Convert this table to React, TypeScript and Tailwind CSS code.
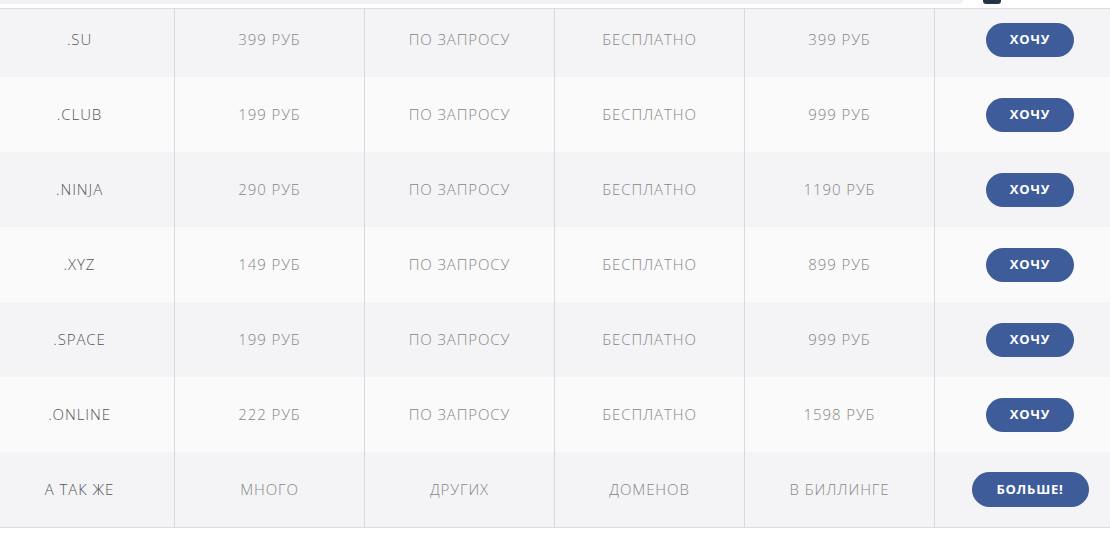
const rows = [
  ['.SU', '399 РУБ', 'ПО ЗАПРОСУ', 'БЕСПЛАТНО', '399 РУБ'],
  ['.CLUB', '199 РУБ', 'ПО ЗАПРОСУ', 'БЕСПЛАТНО', '999 РУБ'],
  ['.NINJA', '290 РУБ', 'ПО ЗАПРОСУ', 'БЕСПЛАТНО', '1190 РУБ'],
  ['.XYZ', '149 РУБ', 'ПО ЗАПРОСУ', 'БЕСПЛАТНО', '899 РУБ'],
  ['.SPACE', '199 РУБ', 'ПО ЗАПРОСУ', 'БЕСПЛАТНО', '999 РУБ'],
  ['.ONLINE', '222 РУБ', 'ПО ЗАПРОСУ', 'БЕСПЛАТНО', '1598 РУБ'],
  ['А ТАК ЖЕ', 'МНОГО', 'ДРУГИХ', 'ДОМЕНОВ', 'В БИЛЛИНГЕ'],
];

export default function App() {
  return (
    <div className="w-[1110px] h-[534px] overflow-hidden bg-white font-['Open_Sans',sans-serif]">
      <div className="flex h-[8px] items-start">
        <div className="w-[963px] h-[4px] bg-[#f1f1f3] rounded-br-[4px]" />
        <div className="ml-[20px] w-[18px] h-[4px] bg-[#26344a] rounded-b-[3px]" />
      </div>
      <div className="h-px bg-[#dcdce0]" />
      <div className="-ml-[15px] w-[1140px] border-b border-[#dcdce0]">
        {rows.map((r, i) => {
          const last = i === rows.length - 1;
          return (
            <div
              key={i}
              className={`grid grid-cols-6 ${i === 0 ? 'h-[68px]' : 'h-[75px]'} ${
                i % 2 === 0 ? 'bg-[#f4f4f7]' : 'bg-[#fafafa]'
              }`}
            >
              {r.map((c, j) => (
                <div
                  key={j}
                  className={`flex items-center justify-center border-r border-[#d8d8de] text-[15px] font-light tracking-[0.9px] ${
                    j === 0 ? 'text-[#555]' : 'text-[#868686]'
                  }`}
                >
                  <span className={i === 0 ? '-mt-[7px]' : ''}>{c}</span>
                </div>
              ))}
              <div className="flex items-center justify-center">
                <button
                  className={`${i === 0 ? '-mt-[7px]' : ''} ${
                    last ? 'w-[117px] h-[35px]' : 'w-[88px] h-[34px]'
                  } rounded-full bg-[#3e5c99] text-white text-[13px] font-bold tracking-[0.8px]`}
                >
                  {last ? 'БОЛЬШЕ!' : 'ХОЧУ'}
                </button>
              </div>
            </div>
          );
        })}
      </div>
    </div>
  );
}
